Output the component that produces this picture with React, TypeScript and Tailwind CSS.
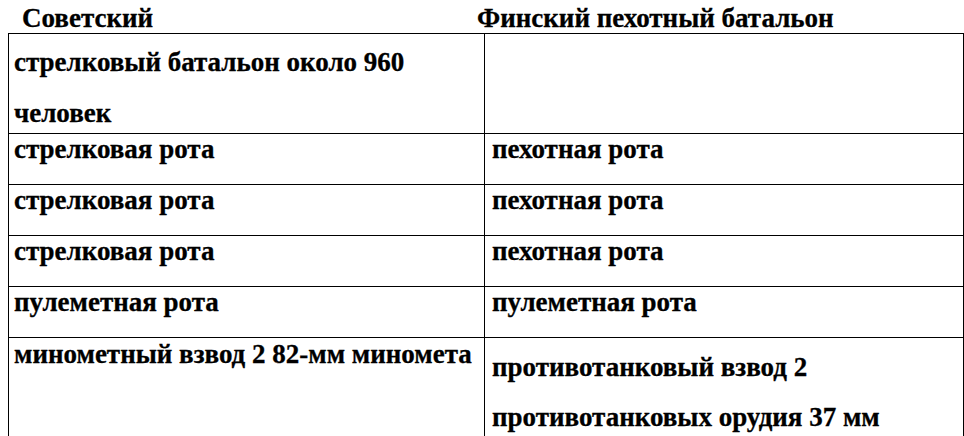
import React from 'react';

const rows = [
  { left: 'стрелковая рота', right: 'пехотная рота' },
  { left: 'стрелковая рота', right: 'пехотная рота' },
  { left: 'стрелковая рота', right: 'пехотная рота' },
  { left: 'пулеметная рота', right: 'пулеметная рота' },
];

export default function App() {
  return (
    <div className="w-[964px] h-[436px] overflow-hidden bg-white text-black font-bold text-[27px] leading-[30px] font-['Liberation_Serif','Times_New_Roman',serif] [-webkit-text-stroke:0.3px_#000]">
      <div className="flex h-[33px] pt-[3px]">
        <div className="w-[477px] pl-[22px]">Советский</div>
        <div>Финский пехотный батальон</div>
      </div>

      <div className="ml-[8px] w-[956px] border border-black">
        <div className="flex h-[100px] border-b border-black">
          <div className="w-[476px] border-r border-black pl-[5px] pt-[3px] leading-[51px]">
            стрелковый батальон около 960
            <br />
            человек
          </div>
          <div className="flex-1"></div>
        </div>

        {rows.map((r, i) => (
          <div key={i} className="flex h-[51px] border-b border-black">
            <div className="w-[476px] border-r border-black pl-[5px]">{r.left}</div>
            <div className="flex-1 pl-[7px]">{r.right}</div>
          </div>
        ))}

        <div className="flex h-[120px]">
          <div className="w-[476px] border-r border-black pl-[5px] pt-[1px] whitespace-nowrap">
            минометный взвод 2 82-мм миномета
          </div>
          <div className="flex-1 pl-[7px] pt-[4px] leading-[50px]">
            противотанковый взвод 2
            <br />
            противотанковых орудия 37 мм
          </div>
        </div>
      </div>
    </div>
  );
}
